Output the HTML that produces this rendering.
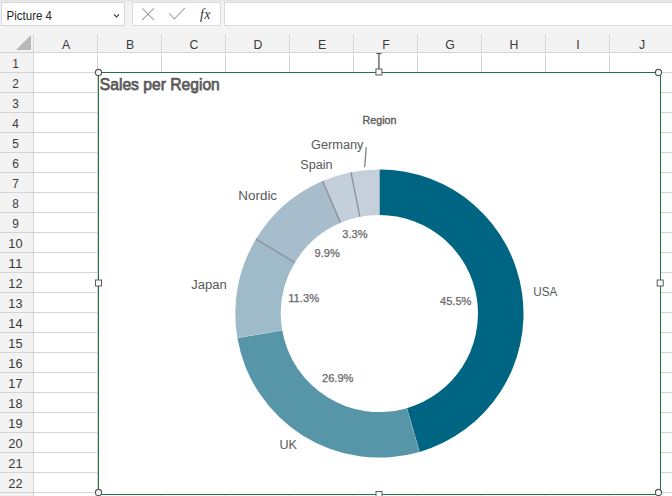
<!DOCTYPE html>
<html><head><meta charset="utf-8">
<style>
html,body{margin:0;padding:0;width:672px;height:496px;overflow:hidden;background:#fff;}
svg{position:absolute;left:0;top:0;display:block;}
</style></head><body>
<svg width="672" height="496" viewBox="0 0 672 496" font-family="Liberation Sans, sans-serif">
<rect x="0" y="0" width="672" height="52" fill="#f3f3f3"/>
<rect x="0" y="0" width="672" height="1" fill="#e4e4e4"/><rect x="0" y="1" width="672" height="1" fill="#ececec"/>
<rect x="1.5" y="2.5" width="123" height="23" fill="#fff" stroke="#d6d6d6" stroke-width="1"/>
<text x="6.5" y="19.9" font-size="12.3" fill="#262626" textLength="45.5" lengthAdjust="spacingAndGlyphs">Picture 4</text>
<path d="M114,14.4 L116.5,16.9 L119,14.4" fill="none" stroke="#333" stroke-width="1.05"/>
<rect x="132.5" y="2.5" width="88" height="23" fill="#fff" stroke="#dcdcdc" stroke-width="1"/>
<path d="M142.2,8.3 L154,20 M154,8.3 L142.2,20" stroke="#a6a6a6" stroke-width="1.1" fill="none"/>
<path d="M169.2,13.4 L174.3,19 L184.8,8.2" stroke="#a6a6a6" stroke-width="1.1" fill="none"/>
<text x="200" y="18.8" style="font-family:'Liberation Serif',serif;font-style:italic" font-size="14" fill="#333">f<tspan dx="0.3">x</tspan></text>
<rect x="224.5" y="2.5" width="460" height="23" fill="#fff" stroke="#dcdcdc" stroke-width="1"/>
<rect x="0" y="52" width="33" height="444" fill="#f3f3f3"/>
<polygon points="16,50 31,35 31,50" fill="#b8b8b8"/>
<g stroke="#d4d4d4" stroke-width="1" shape-rendering="crispEdges">
<line x1="0" y1="52.5" x2="672" y2="52.5"/><line x1="0" y1="72.5" x2="672" y2="72.5"/><line x1="0" y1="92.5" x2="672" y2="92.5"/><line x1="0" y1="112.5" x2="672" y2="112.5"/><line x1="0" y1="132.5" x2="672" y2="132.5"/><line x1="0" y1="152.5" x2="672" y2="152.5"/><line x1="0" y1="172.5" x2="672" y2="172.5"/><line x1="0" y1="192.5" x2="672" y2="192.5"/><line x1="0" y1="212.5" x2="672" y2="212.5"/><line x1="0" y1="232.5" x2="672" y2="232.5"/><line x1="0" y1="252.5" x2="672" y2="252.5"/><line x1="0" y1="272.5" x2="672" y2="272.5"/><line x1="0" y1="292.5" x2="672" y2="292.5"/><line x1="0" y1="312.5" x2="672" y2="312.5"/><line x1="0" y1="332.5" x2="672" y2="332.5"/><line x1="0" y1="352.5" x2="672" y2="352.5"/><line x1="0" y1="372.5" x2="672" y2="372.5"/><line x1="0" y1="392.5" x2="672" y2="392.5"/><line x1="0" y1="412.5" x2="672" y2="412.5"/><line x1="0" y1="432.5" x2="672" y2="432.5"/><line x1="0" y1="452.5" x2="672" y2="452.5"/><line x1="0" y1="472.5" x2="672" y2="472.5"/><line x1="0" y1="492.5" x2="672" y2="492.5"/><line x1="33.5" y1="34" x2="33.5" y2="496"/><line x1="97.5" y1="34" x2="97.5" y2="496"/><line x1="161.5" y1="34" x2="161.5" y2="496"/><line x1="225.5" y1="34" x2="225.5" y2="496"/><line x1="289.5" y1="34" x2="289.5" y2="496"/><line x1="353.5" y1="34" x2="353.5" y2="496"/><line x1="417.5" y1="34" x2="417.5" y2="496"/><line x1="481.5" y1="34" x2="481.5" y2="496"/><line x1="545.5" y1="34" x2="545.5" y2="496"/><line x1="609.5" y1="34" x2="609.5" y2="496"/>
</g>
<g font-size="12.3" fill="#3b3b3b">
<text x="66" y="48.7" text-anchor="middle">A</text><text x="130" y="48.7" text-anchor="middle">B</text><text x="194" y="48.7" text-anchor="middle">C</text><text x="258" y="48.7" text-anchor="middle">D</text><text x="322" y="48.7" text-anchor="middle">E</text><text x="386" y="48.7" text-anchor="middle">F</text><text x="450" y="48.7" text-anchor="middle">G</text><text x="514" y="48.7" text-anchor="middle">H</text><text x="578" y="48.7" text-anchor="middle">I</text><text x="642" y="48.7" text-anchor="middle">J</text>
<text x="12.3" y="68" textLength="6.6" lengthAdjust="spacingAndGlyphs">1</text><text x="12.3" y="88" textLength="6.6" lengthAdjust="spacingAndGlyphs">2</text><text x="12.3" y="108" textLength="6.6" lengthAdjust="spacingAndGlyphs">3</text><text x="12.3" y="128" textLength="6.6" lengthAdjust="spacingAndGlyphs">4</text><text x="12.3" y="148" textLength="6.6" lengthAdjust="spacingAndGlyphs">5</text><text x="12.3" y="168" textLength="6.6" lengthAdjust="spacingAndGlyphs">6</text><text x="12.3" y="188" textLength="6.6" lengthAdjust="spacingAndGlyphs">7</text><text x="12.3" y="208" textLength="6.6" lengthAdjust="spacingAndGlyphs">8</text><text x="12.3" y="228" textLength="6.6" lengthAdjust="spacingAndGlyphs">9</text><text x="8.3" y="248" textLength="14.2" lengthAdjust="spacingAndGlyphs">10</text><text x="8.3" y="268" textLength="14.2" lengthAdjust="spacingAndGlyphs">11</text><text x="8.3" y="288" textLength="14.2" lengthAdjust="spacingAndGlyphs">12</text><text x="8.3" y="308" textLength="14.2" lengthAdjust="spacingAndGlyphs">13</text><text x="8.3" y="328" textLength="14.2" lengthAdjust="spacingAndGlyphs">14</text><text x="8.3" y="348" textLength="14.2" lengthAdjust="spacingAndGlyphs">15</text><text x="8.3" y="368" textLength="14.2" lengthAdjust="spacingAndGlyphs">16</text><text x="8.3" y="388" textLength="14.2" lengthAdjust="spacingAndGlyphs">17</text><text x="8.3" y="408" textLength="14.2" lengthAdjust="spacingAndGlyphs">18</text><text x="8.3" y="428" textLength="14.2" lengthAdjust="spacingAndGlyphs">19</text><text x="8.3" y="448" textLength="14.2" lengthAdjust="spacingAndGlyphs">20</text><text x="8.3" y="468" textLength="14.2" lengthAdjust="spacingAndGlyphs">21</text><text x="8.3" y="488" textLength="14.2" lengthAdjust="spacingAndGlyphs">22</text>
</g>
<rect x="98" y="72" width="562" height="422" fill="#fff"/>
<g>
<path d="M379.40,169.40A144.1,144.1 0 0 1 419.60,451.88L406.91,408.18A98.6,98.6 0 0 0 379.40,214.90Z" fill="#006582"/><path d="M419.60,451.88A144.1,144.1 0 0 1 237.40,338.03L282.24,330.28A98.6,98.6 0 0 0 406.91,408.18Z" fill="#5795a8"/><path d="M237.40,338.03A144.1,144.1 0 0 1 256.01,239.07L294.97,262.57A98.6,98.6 0 0 0 282.24,330.28Z" fill="#9fbac9"/><path d="M256.01,239.07A144.1,144.1 0 0 1 322.63,181.05L340.56,222.87A98.6,98.6 0 0 0 294.97,262.57Z" fill="#a7bdcb"/><path d="M322.63,181.05A144.1,144.1 0 0 1 350.92,172.24L359.91,216.85A98.6,98.6 0 0 0 340.56,222.87Z" fill="#c3cfdb"/><path d="M350.92,172.24A144.1,144.1 0 0 1 379.40,169.40L379.40,214.90A98.6,98.6 0 0 0 359.91,216.85Z" fill="#c6d0da"/><line x1="419.60" y1="451.88" x2="406.91" y2="408.18" stroke="#ffffff" stroke-opacity="0.22" stroke-width="0.8"/><line x1="237.40" y1="338.03" x2="282.24" y2="330.28" stroke="#ffffff" stroke-opacity="0.22" stroke-width="0.8"/><line x1="256.01" y1="239.07" x2="294.97" y2="262.57" stroke="#8a9399" stroke-width="1.35"/><line x1="322.63" y1="181.05" x2="340.56" y2="222.87" stroke="#8a9399" stroke-width="1.35"/><line x1="350.92" y1="172.24" x2="359.91" y2="216.85" stroke="#8a9399" stroke-width="1.35"/>
</g>
<g fill="#595959">
<text x="99.8" y="89.6" font-size="17" stroke="#595959" stroke-width="0.75" textLength="120" lengthAdjust="spacingAndGlyphs">Sales per Region</text>
<g >
<text x="362.5" y="124" font-size="10.7" stroke="#595959" stroke-width="0.35" textLength="34" lengthAdjust="spacingAndGlyphs">Region</text>
<text x="311" y="148.6" font-size="12.3" textLength="52.5" lengthAdjust="spacingAndGlyphs">Germany</text>
<text x="300.3" y="168.7" font-size="12.3" textLength="32.3" lengthAdjust="spacingAndGlyphs">Spain</text>
<text x="238.3" y="199.8" font-size="12.3" textLength="38.8" lengthAdjust="spacingAndGlyphs">Nordic</text>
<text x="191.2" y="288.75" font-size="12.3" textLength="35.5" lengthAdjust="spacingAndGlyphs">Japan</text>
<text x="533.3" y="295.5" font-size="12.3" textLength="24" lengthAdjust="spacingAndGlyphs">USA</text>
<text x="279.5" y="448.7" font-size="12.3" textLength="17.5" lengthAdjust="spacingAndGlyphs">UK</text>
<text x="440.0" y="305.0" font-size="11" stroke="#686868" stroke-width="0.25" fill="#686868" textLength="31.5" lengthAdjust="spacingAndGlyphs">45.5%</text>
<text x="322.0" y="382.1" font-size="11" stroke="#686868" stroke-width="0.25" fill="#686868" textLength="31.5" lengthAdjust="spacingAndGlyphs">26.9%</text>
<text x="288.2" y="302.0" font-size="11" stroke="#686868" stroke-width="0.25" fill="#686868" textLength="31" lengthAdjust="spacingAndGlyphs">11.3%</text>
<text x="342.3" y="238.0" font-size="11" stroke="#686868" stroke-width="0.25" fill="#686868" textLength="25.2" lengthAdjust="spacingAndGlyphs">3.3%</text>
<text x="314.6" y="257.0" font-size="11" stroke="#686868" stroke-width="0.25" fill="#686868" textLength="25.2" lengthAdjust="spacingAndGlyphs">9.9%</text>
</g>
</g>
<line x1="366.2" y1="147.1" x2="364.7" y2="167.2" stroke="#808080" stroke-width="1.3"/>
<rect x="98.5" y="72.5" width="562" height="422" fill="none" stroke="#217346" stroke-width="1"/>
<line x1="378.9" y1="54" x2="378.9" y2="69" stroke="#8c8c8c" stroke-width="2"/>
<line x1="376.4" y1="53.5" x2="381.4" y2="53.5" stroke="#555" stroke-width="1"/>
<g fill="#f8f8f8" stroke="#555" stroke-width="1.1">
<circle cx="98.5" cy="72.5" r="3.1"/>
<circle cx="658.5" cy="72.5" r="3.1"/>
<circle cx="98.5" cy="492.5" r="3.1"/>
<circle cx="658.5" cy="492.5" r="3.1"/>
</g>
<g fill="#fafafa" stroke="#5c5c5c" stroke-width="1">
<rect x="375.9" y="69" width="6" height="6"/>
<rect x="95.5" y="280" width="6" height="6"/>
<rect x="657.2" y="280" width="6" height="6"/>
<rect x="376" y="491.5" width="6" height="6"/>
</g>
</svg>
</body></html>
